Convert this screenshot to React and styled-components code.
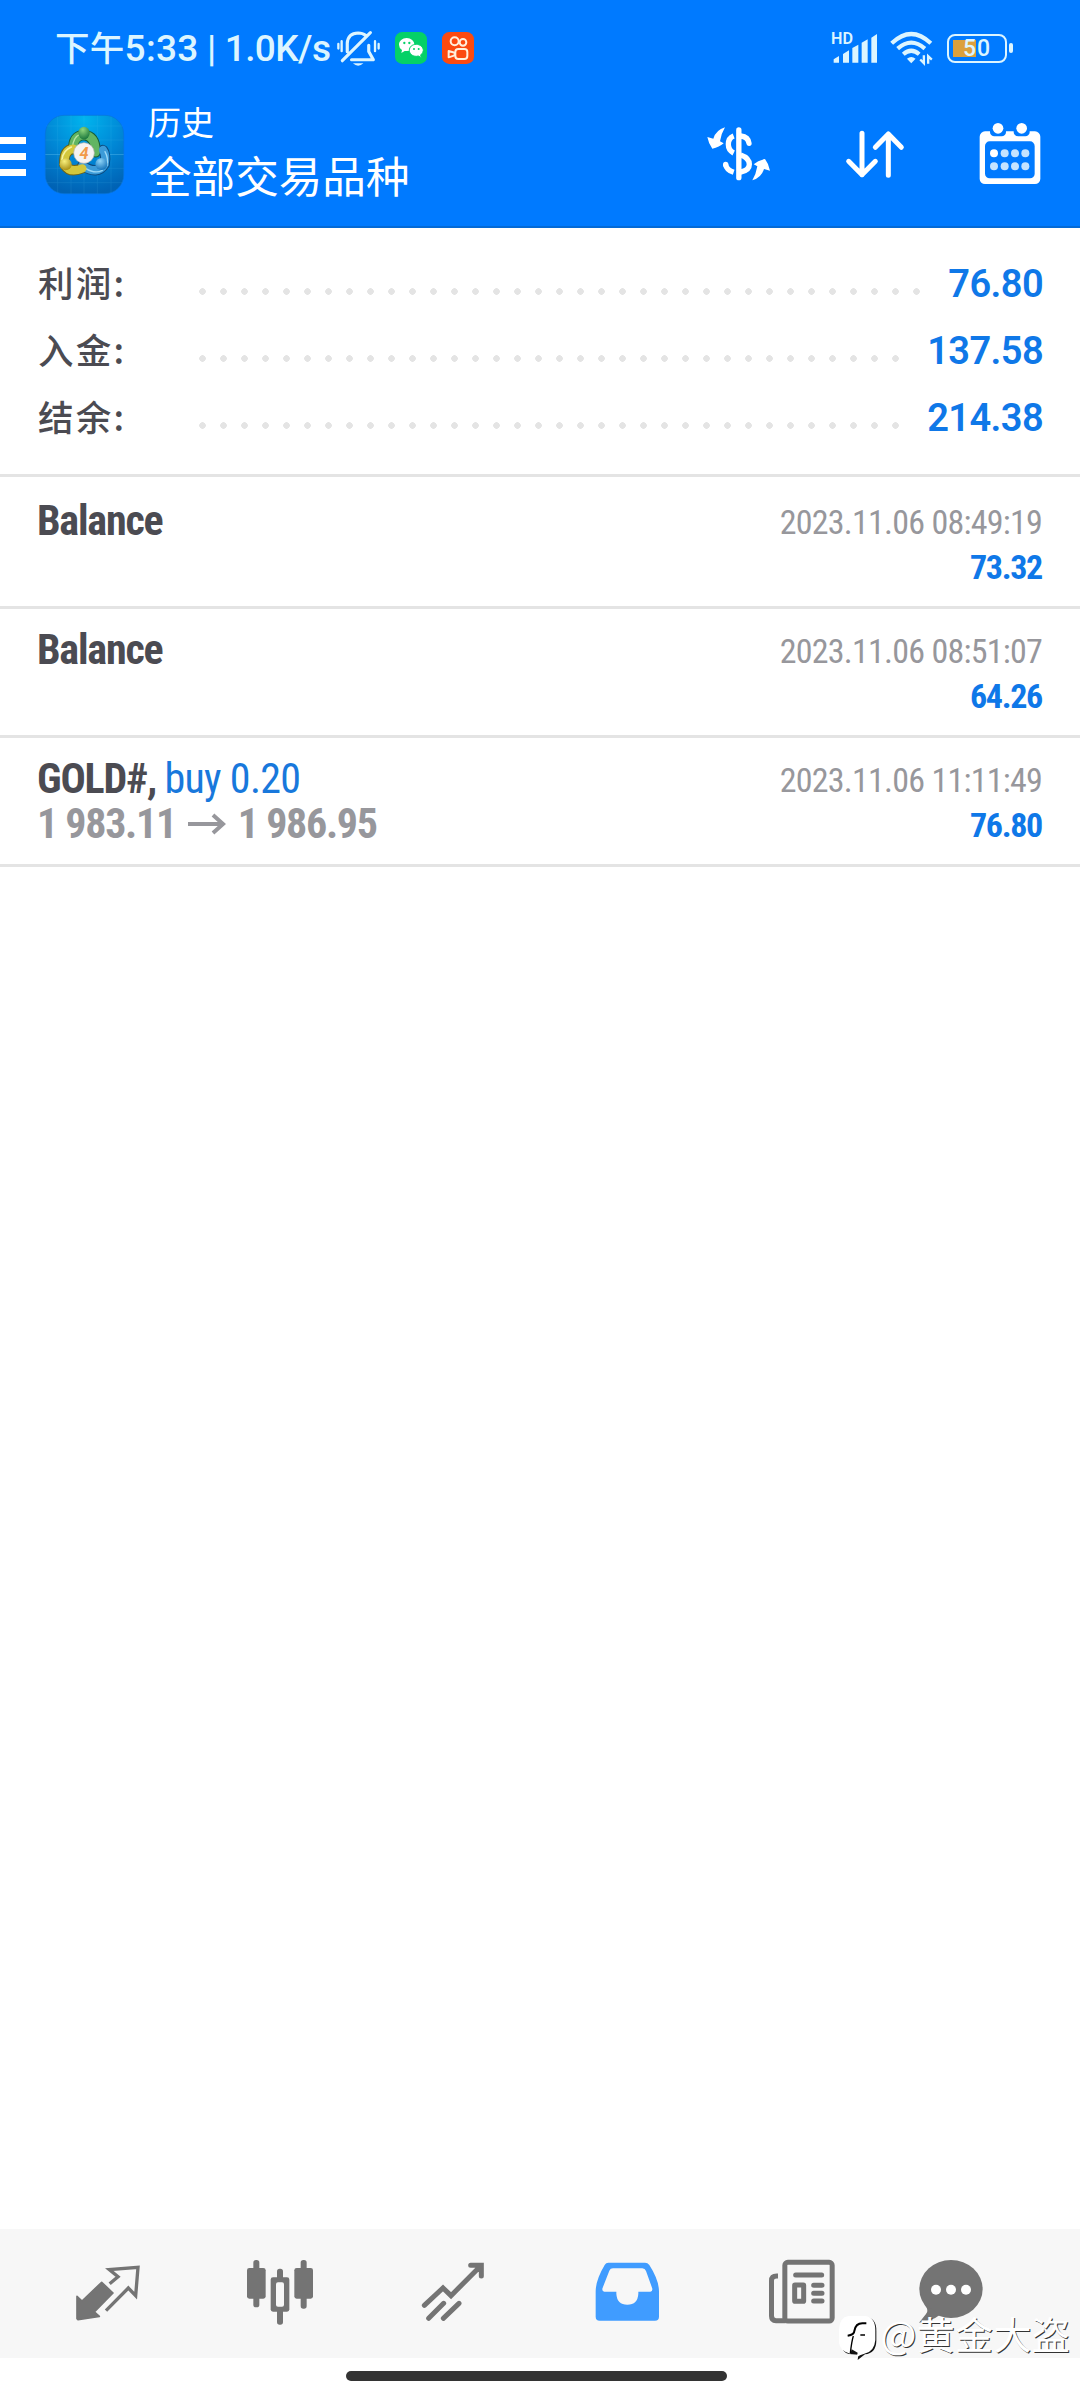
import React from "react";
import styled, { createGlobalStyle } from "styled-components";

const GlobalStyle = createGlobalStyle`
  body {
    margin: 0;
    background: #fff;
    font-family: Roboto, "Noto Sans CJK SC", sans-serif;
  }
  svg {
    display: block;
    overflow: visible;
    flex: none;
  }
`;

const Screen = styled.div`
  position: relative;
  display: flex;
  flex-direction: column;
  width: 1080px;
  height: 2400px;
  overflow: hidden;
  background: #fff;
`;

const Top = styled.header`
  box-sizing: border-box;
  height: 228px;
  background: #007aff;
  border-bottom: 2px solid #046ad6;
`;

const StatusBar = styled.div`
  display: flex;
  align-items: center;
  height: 96px;
  padding: 0 67px 0 55px;
  color: #dcf5ff;
`;

const Clock = styled.div`
  width: 282px;
  padding-bottom: 2px;
  font-size: 37px;
  font-weight: 500;
  letter-spacing: 0.3px;
  word-spacing: -1.2px;
  line-height: 48px;
  white-space: nowrap;
`;

const Cjk = styled.span`
  font-family: "Noto Sans CJK SC", sans-serif;
  font-size: 34.5px;
  font-weight: 500;
`;

const Speed = styled.span`
  letter-spacing: -0.6px;
`;

const AppBadges = styled.div`
  display: flex;
  flex: 1;
  align-items: center;
  gap: 15px;
`;

const Battery = styled.div`
  display: flex;
  align-items: center;
  gap: 2px;
  margin-left: 14px;
`;

const BatteryCell = styled.div`
  box-sizing: border-box;
  width: 60px;
  height: 29px;
  border: 2.5px solid #dcf5ff;
  border-radius: 8px;
  text-align: center;
  font-size: 23px;
  font-weight: 500;
  letter-spacing: 1px;
  line-height: 25px;
  background: linear-gradient(#dca03c, #dca03c) 4px center / 23px 17px no-repeat;
`;

const BatteryTip = styled.div`
  width: 4px;
  height: 10px;
  border-radius: 2px;
  background: #dcf5ff;
`;

const TitleBar = styled.div`
  display: flex;
  align-items: center;
  height: 117px;
  padding-right: 38px;
`;

const Burger = styled.button`
  display: flex;
  flex-direction: column;
  gap: 9px;
  width: 26px;
  margin-right: 19px;
  padding: 3px 0 0;
  border: 0;
  background: transparent;
  span {
    height: 7px;
    background: #fff;
  }
`;

const Titles = styled.div`
  flex: 1;
  margin: -10px 0 0 24px;
  color: #fff;
  font-family: "Noto Sans CJK SC", sans-serif;
`;

const Title = styled.div`
  font-size: 33px;
  line-height: 50px;
`;

const Subtitle = styled.div`
  font-size: 43.6px;
  line-height: 57px;
`;

const Actions = styled.div`
  display: flex;
  align-items: center;
  gap: 71px;
  padding-bottom: 2px;
`;

const Summary = styled.section`
  padding: 22px 37px 23px 38px;
  border-bottom: 3px solid #e4e4e4;
`;

const SummaryRow = styled.div`
  display: flex;
  align-items: center;
  height: 67px;
`;

const Label = styled.div`
  width: 154px;
  padding-bottom: 4px;
  color: #4b4b52;
  font-family: "Noto Sans CJK SC", sans-serif;
  font-size: 35.5px;
  font-weight: 500;
  letter-spacing: 2.2px;
`;

const Leader = styled.div`
  flex: 1;
  height: 7px;
  margin: 15px 20px 0 0;
  background: radial-gradient(circle, #e4e4e4 3px, transparent 3.6px) 0 0 / 21px
    7px repeat-x;
`;

const Total = styled.div`
  color: #0f78e8;
  font-size: 38px;
  font-weight: 600;
  letter-spacing: -0.6px;
`;

const History = styled.main`
  flex: 1;
  padding-top: 3px;
`;

const Deal = styled.div`
  box-sizing: border-box;
  display: flex;
  justify-content: space-between;
  height: 129px;
  padding: 18px 38px 0 37px;
  border-bottom: 3px solid #e4e4e4;
  font-family: "Roboto Condensed", Roboto, sans-serif;
  font-stretch: 75%;
  line-height: 45px;
  white-space: nowrap;
`;

const Symbol = styled.div`
  color: #4b4b52;
  font-size: 42px;
  font-weight: 700;
  letter-spacing: -1.2px;
`;

const Side = styled.span`
  color: #1878dc;
  font-weight: 400;
  letter-spacing: -0.7px;
`;

const Prices = styled.div`
  display: flex;
  align-items: center;
  gap: 12px;
  color: #97979c;
  font-size: 42px;
  font-weight: 700;
  letter-spacing: -1.3px;
`;

const DealRight = styled.div`
  padding-top: 2px;
  text-align: right;
  font-size: 34px;
`;

const DealTime = styled.div`
  color: #97979c;
  letter-spacing: -0.75px;
`;

const Profit = styled.div`
  color: #0f78e8;
  font-weight: 700;
  letter-spacing: -1.3px;
`;

const TabBar = styled.nav`
  display: grid;
  grid-template-columns: repeat(5, 173.3px) 127px;
  place-items: center;
  box-sizing: border-box;
  height: 129px;
  padding: 0 0 2px 21px;
  background: #f7f7f7;
`;

const HomeArea = styled.div`
  display: flex;
  justify-content: center;
  box-sizing: border-box;
  height: 42px;
  padding: 13px 7px 0 0;
`;

const HomePill = styled.div`
  width: 381px;
  height: 10px;
  border-radius: 5px;
  background: #333;
`;

const Watermark = styled.div`
  position: absolute;
  right: 10px;
  bottom: 35px;
  display: flex;
  align-items: center;
  gap: 5px;
  color: #fff;
  font-family: "Noto Sans CJK SC", sans-serif;
  font-size: 38px;
  line-height: 46px;
  text-shadow: 1px 1px 0 #333;
`;

const Author = styled.span`
  padding-bottom: 9px;
  letter-spacing: 0.3px;
`;

const MuteIcon = () => (
  <svg width="43" height="37" viewBox="0 0 130 112" fill="none" stroke="#dcf5ff" strokeWidth="9.5" strokeLinecap="round" strokeLinejoin="round">
    <path d="M31 66V40Q33 10 64 9Q78 9 86 16M16 93 101 8M96 46V65L110 90H44" />
    <path d="M4 42V56M14 34V64M115 34V64M126 42V56" strokeWidth="7" />
    <path d="M48 101H80Q64 116 48 101Z" fill="#dcf5ff" stroke="none" />
  </svg>
);

const WeChatIcon = () => (
  <svg width="32" height="32" viewBox="0 0 96 96">
    <rect width="96" height="96" rx="22" fill="#05d167" />
    <path d="M35 18C22 18 12 27 12 38Q12 48 21 54L19 63 29 57Q57 60 58 38C58 27 48 18 35 18Z" fill="#fff" />
    <path d="M64 37C51 37 43 45 43 55S52 73 64 73L70 72 79 77 77 69Q85 63 85 55C85 45 75 37 64 37Z" fill="#fff" stroke="#05d167" strokeWidth="3" />
    <g fill="#05d167">
      <circle cx="28" cy="33" r="3.5" />
      <circle cx="43" cy="33" r="3.5" />
      <circle cx="57" cy="51" r="3" />
      <circle cx="71" cy="51" r="3" />
    </g>
  </svg>
);

const KwaiIcon = () => (
  <svg width="32" height="32" viewBox="0 0 96 96">
    <rect width="96" height="96" rx="22" fill="#fb4a10" />
    <g fill="none" stroke="#fff0dc" strokeWidth="6" strokeLinejoin="round">
      <circle cx="38" cy="28" r="12" />
      <circle cx="63" cy="31" r="10" />
      <rect x="40" y="51" width="36" height="30" rx="9" />
      <path d="M20 57V76L38 70V62Z" />
    </g>
  </svg>
);

const SignalIcon = () => (
  <svg width="47" height="32" viewBox="0 0 141 96" fill="#dcf5ff">
    <text x="0" y="36" fontFamily="Roboto, sans-serif" fontSize="47" fontWeight="600" textLength="66" lengthAdjust="spacingAndGlyphs">HD</text>
    <path d="M8 92V82L24 72V92ZM36 92V66L54 55V92ZM64 92V48L82 38V92ZM92 92V32L110 22V92ZM121 92V17L138 6V92Z" strokeLinejoin="round" />
  </svg>
);

const WifiShape = styled.svg`
  margin-left: 11px;
`;

const WifiIcon = () => (
  <WifiShape width="44.5" height="34.5" viewBox="0 0 134 104" fill="none" stroke="#dcf5ff" strokeWidth="12.5">
    <path d="M8 37Q67-19 126 37M26 53Q67 17 108 53M43 70Q67 49 91 70" />
    <path d="M54 84Q67 72 80 84L67 97Z" fill="#dcf5ff" stroke="none" />
    <path d="M105 73V97L94 86M118 99V76L129 86" strokeWidth="7" />
  </WifiShape>
);

const LogoIcon = () => (
  <svg width="79" height="79" viewBox="0 0 237 237">
    <defs>
      <radialGradient id="sky" cx="50%" cy="5%" r="95%">
        <stop offset="0" stopColor="#00b4ee" />
        <stop offset="0.55" stopColor="#0085d4" />
        <stop offset="1" stopColor="#0062b4" />
      </radialGradient>
      <radialGradient id="green" cx="40%" cy="25%" r="80%">
        <stop offset="0" stopColor="#8fd67c" />
        <stop offset="1" stopColor="#15733a" />
      </radialGradient>
      <radialGradient id="gold" cx="40%" cy="25%" r="80%">
        <stop offset="0" stopColor="#f7ef7c" />
        <stop offset="1" stopColor="#a48a10" />
      </radialGradient>
      <radialGradient id="blue" cx="40%" cy="25%" r="80%">
        <stop offset="0" stopColor="#8fd4f7" />
        <stop offset="1" stopColor="#0f6fb8" />
      </radialGradient>
    </defs>
    <rect x="1" y="1" width="235" height="235" rx="56" fill="url(#sky)" stroke="#0873d8" strokeWidth="2" />
    <path d="M38 4V233M78 1V236M117 1V236M157 1V236M198 4V233M4 33H233M1 75H236M1 160H236M4 203H233" stroke="#5cc8f5" strokeWidth="2" opacity="0.18" />
    <path d="M1 118H236" stroke="#7cd4fa" strokeWidth="2" opacity="0.55" />
    <g fill="none" strokeLinecap="round">
      <path d="M85 103Q83 62 117 60Q152 63 152 112" stroke="#175c35" strokeWidth="31" />
      <path d="M174 105Q184 118 179 147Q158 182 112 152" stroke="#0b4b80" strokeWidth="31" />
      <path d="M85 101Q56 105 58 148Q74 176 112 160" stroke="#6f6416" strokeWidth="31" />
      <path d="M85 103Q83 62 117 60Q152 63 152 112" stroke="#62b562" strokeWidth="25" />
      <path d="M82 100Q84 66 106 57" stroke="#b8e3a4" strokeWidth="4" />
      <path d="M174 105Q184 118 179 147Q158 182 112 152" stroke="#3c9bd8" strokeWidth="25" />
      <path d="M180 110Q191 130 186 151M172 166Q150 178 122 160" stroke="#9ad7f6" strokeWidth="4" />
      <path d="M85 101Q56 105 58 148Q74 176 112 160" stroke="#d3c73c" strokeWidth="25" />
      <path d="M79 96Q54 106 51 134" stroke="#f6f2a0" strokeWidth="5" />
    </g>
    <ellipse cx="117" cy="54" rx="17" ry="19" fill="url(#green)" />
    <circle cx="62" cy="148" r="18" fill="url(#gold)" />
    <circle cx="169" cy="147" r="18" fill="url(#blue)" />
    <circle cx="117" cy="114" r="31" fill="#f6f3f2" stroke="#b9b4ac" strokeWidth="2" />
    <text x="117" y="131" textAnchor="middle" fontFamily="Roboto, sans-serif" fontSize="49" fontWeight="700" fontStyle="italic" fill="#f19a4a">4</text>
  </svg>
);

const CurrencyIcon = () => (
  <svg width="66" height="56" viewBox="0 0 198 168" fill="none" stroke="#fff" strokeWidth="16">
    <path d="M98.500 12V155" strokeLinecap="round" />
    <path d="M83 30Q67 36 67 55Q67 73 83 81M59 116Q62 132 83 139" />
    <path d="M104 30Q127 33 129 52" strokeLinecap="round" />
    <path d="M59 116V115" strokeLinecap="round" />
    <path d="M104 87Q130 96 130 115Q130 134 104 138" />
    <path d="M57 4Q30 12 22 38L4 33Q8 54 19 68Q40 64 53 52L42 46Q46 22 57 4ZM139 163Q166 155 174 129L192 134Q188 113 177 99Q156 103 143 115L154 121Q150 145 139 163Z" fill="#fff" stroke="none" />
  </svg>
);

const SortIcon = () => (
  <svg width="64" height="52" viewBox="0 0 192 156" fill="none" stroke="#fff" strokeWidth="15" strokeLinecap="round" strokeLinejoin="round">
    <path d="M57 16V140M17 100 57 140 97 100M136 142V18M97 58 136 18 175 58" />
  </svg>
);

const CalendarIcon = () => (
  <svg width="64" height="64" viewBox="0 0 192 192" fill="#fff">
    <rect x="5" y="28" width="182" height="158" rx="16" />
    <rect x="21" y="58" width="149" height="111" rx="14" fill="#007aff" />
    <rect x="36" y="4" width="48" height="39" rx="13" fill="#007aff" />
    <rect x="107" y="4" width="48" height="39" rx="13" fill="#007aff" />
    <circle cx="60" cy="19" r="16" />
    <circle cx="131" cy="19" r="16" />
    <circle cx="48" cy="94" r="12" />
    <g fill="#c4e3ff">
      <circle cx="80" cy="94" r="12" />
      <circle cx="111" cy="94" r="12" />
      <circle cx="142" cy="94" r="12" />
      <circle cx="48" cy="133" r="12" />
      <circle cx="80" cy="133" r="12" />
      <circle cx="111" cy="133" r="12" />
      <circle cx="142" cy="133" r="12" />
    </g>
  </svg>
);

const ArrowIcon = () => (
  <svg width="38" height="20" viewBox="0 0 38 20" fill="none" stroke="#97979c" strokeWidth="4">
    <path d="M0 10H35M25 1 35 10 25 19" />
  </svg>
);

const QuotesIcon = () => (
  <svg width="66" height="66" viewBox="0 0 198 198" fill="none" stroke="#747474" strokeLinejoin="round">
    <path d="M6 109 21 123 80 67 114 99 58 156 73 169 9 179 6 176Z" fill="#747474" strokeWidth="5" />
    <path d="M104 71 129 50 103 29 189 22 182 107 160 84 93 152" strokeWidth="10" strokeLinejoin="miter" />
  </svg>
);

const ChartIcon = () => (
  <svg width="66" height="66" viewBox="0 0 198 198" fill="#747474">
    <rect x="16" y="0" width="18" height="142" rx="8" />
    <rect x="-3" y="24" width="56" height="92" rx="7" />
    <rect x="87" y="26" width="18" height="168" rx="8" />
    <rect x="68" y="52" width="56" height="103" rx="7" />
    <rect x="84" y="67" width="24" height="73" rx="6" fill="#f7f7f7" />
    <rect x="158" y="0" width="18" height="146" rx="8" />
    <rect x="139" y="24" width="56" height="92" rx="7" />
  </svg>
);

const TradeIcon = () => (
  <svg width="66" height="66" viewBox="0 0 198 198" fill="none" stroke="#747474" strokeWidth="15" strokeLinecap="round">
    <path d="M10 136 66 84 90 107 178 19M149 16H181V48M23 175 68 130M67 175 114 130" />
  </svg>
);

const HistoryIcon = () => (
  <svg width="66" height="66" viewBox="0 0 198 198" fill="#409cff" fillRule="evenodd">
    <path d="M40 8H150Q158 8 163 15Q192 60 192 95V170Q192 182 180 182H14Q2 182 2 170V95Q2 60 29 15Q33 8 40 8ZM54 25Q46 25 43 32L22 86Q21 95 28 95H64V101Q66 134 97 134Q128 134 130 101V95H166Q173 95 172 86L153 33Q150 25 142 25Z" />
  </svg>
);

const NewsIcon = () => (
  <svg width="66" height="66" viewBox="0 0 198 198" fill="none" stroke="#747474" strokeWidth="15">
    <rect x="50.500" y="7" width="142" height="176" rx="9" />
    <path d="M30 48H26Q10.500 48 10.500 62V168Q10.500 182 24 182H52" />
    <path d="M83 45H161M137 76H162M137 100H162M137 123H162" strokeLinecap="round" />
    <rect x="80" y="75" width="27" height="49" rx="1" />
  </svg>
);

const ChatIcon = () => (
  <svg width="66" height="66" viewBox="0 0 198 198" fill="#747474">
    <ellipse cx="99" cy="87" rx="95" ry="87" />
    <path d="M20 134Q34 152 24 162L3 188Q44 182 66 164Z" />
    <g fill="#fff">
      <circle cx="54" cy="89" r="15" />
      <circle cx="99" cy="89" r="15" />
      <circle cx="144" cy="89" r="15" />
    </g>
  </svg>
);

const MarkIcon = () => (
  <svg width="37" height="44" viewBox="0 0 111 132">
    <path d="M80 3Q113 6 112 45V75Q111 112 78 115L56 132 58 116 30 114Q20 113 12 103Z" fill="#111" />
    <path d="M28 0H78Q109 4 109 42V72Q106 108 76 113Q62 117 53 124L56 110 38 100 34 113Q2 104 0 80V40Q2 4 28 0Z" fill="#fff" />
    <path d="M82 22H70Q50 22 46 45Q46 56 26 59" fill="none" stroke="#000" strokeWidth="6" />
    <path d="M43 60Q38 76 34 112M64 57H78" fill="none" stroke="#000" strokeWidth="4" />
  </svg>
);

const totals = [
  { label: "利润:", value: "76.80" },
  { label: "入金:", value: "137.58" },
  { label: "结余:", value: "214.38" },
];

const deals = [
  { symbol: "Balance", time: "2023.11.06 08:49:19", profit: "73.32" },
  { symbol: "Balance", time: "2023.11.06 08:51:07", profit: "64.26" },
  {
    symbol: "GOLD#,",
    side: "buy 0.20",
    open: "1 983.11",
    close: "1 986.95",
    time: "2023.11.06 11:11:49",
    profit: "76.80",
  },
];

const App = () => {
  return (
    <Screen>
      <GlobalStyle />
      <Top>
        <StatusBar>
          <Clock>
            <Cjk>下午</Cjk>5:33 | <Speed>1.0K/s</Speed>
          </Clock>
          <AppBadges>
            <MuteIcon />
            <WeChatIcon />
            <KwaiIcon />
          </AppBadges>
          <SignalIcon />
          <WifiIcon />
          <Battery>
            <BatteryCell>50</BatteryCell>
            <BatteryTip />
          </Battery>
        </StatusBar>
        <TitleBar>
          <Burger>
            <span />
            <span />
            <span />
          </Burger>
          <LogoIcon />
          <Titles>
            <Title>历史</Title>
            <Subtitle>全部交易品种</Subtitle>
          </Titles>
          <Actions>
            <CurrencyIcon />
            <SortIcon />
            <CalendarIcon />
          </Actions>
        </TitleBar>
      </Top>
      <Summary>
        {totals.map((item) => (
          <SummaryRow key={item.label}>
            <Label>{item.label}</Label>
            <Leader />
            <Total>{item.value}</Total>
          </SummaryRow>
        ))}
      </Summary>
      <History>
        {deals.map((deal) => (
          <Deal key={deal.time}>
            <div>
              <Symbol>
                {deal.symbol} {deal.side && <Side>{deal.side}</Side>}
              </Symbol>
              {deal.open && (
                <Prices>
                  {deal.open}
                  <ArrowIcon />
                  {deal.close}
                </Prices>
              )}
            </div>
            <DealRight>
              <DealTime>{deal.time}</DealTime>
              <Profit>{deal.profit}</Profit>
            </DealRight>
          </Deal>
        ))}
      </History>
      <TabBar>
        <QuotesIcon />
        <ChartIcon />
        <TradeIcon />
        <HistoryIcon />
        <NewsIcon />
        <ChatIcon />
      </TabBar>
      <HomeArea>
        <HomePill />
      </HomeArea>
      <Watermark>
        <MarkIcon />
        <Author>@黄金大盗</Author>
      </Watermark>
    </Screen>
  );
};

export default App;
